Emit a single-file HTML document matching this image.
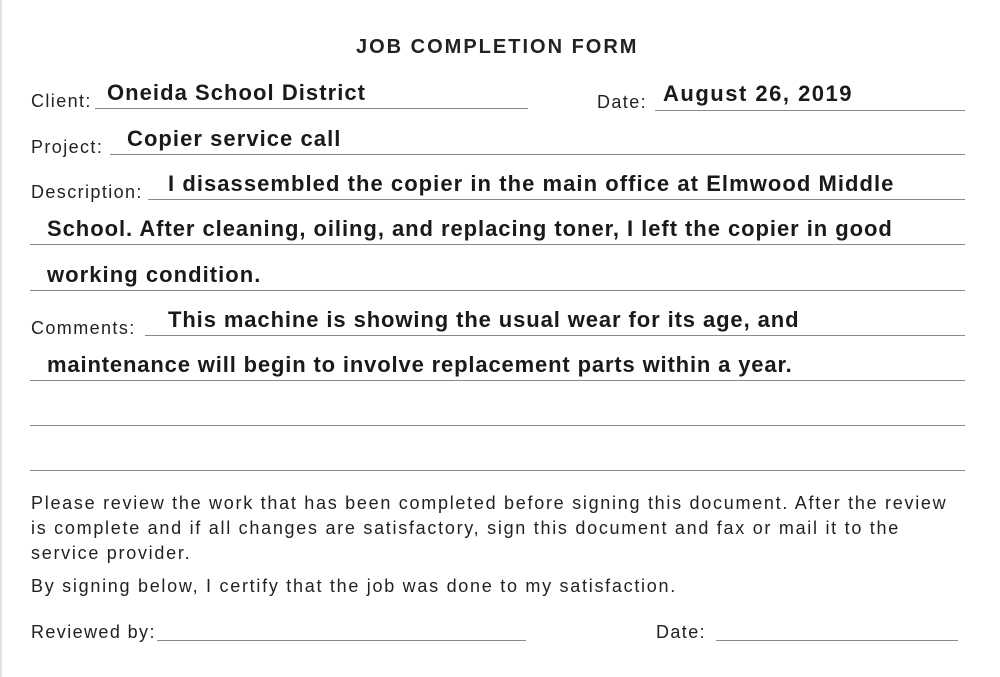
<!DOCTYPE html>
<html><head><meta charset="utf-8"><style>
body{margin:0;width:1000px;height:677px;background:#fff;position:relative;overflow:hidden;font-family:"Liberation Sans",sans-serif;color:#222}
.b{position:absolute;left:0;top:0;width:2px;height:677px;background:#e4e2dc}
.t{position:absolute;white-space:nowrap}
.l{position:absolute;height:0;border-top:1.5px solid #8a8a8a}
.lab{font-size:18px;color:#222;letter-spacing:1.4px}
.h{font-size:22px;font-weight:bold;color:#1a1a1a;letter-spacing:1.05px}
.p{font-size:18px;color:#222;line-height:25px;letter-spacing:1.72px}
</style></head><body>
<div class="b"></div>
<div class="t" style="left:356px;top:36px;font-size:20px;font-weight:bold;letter-spacing:2px">JOB COMPLETION FORM</div>

<div class="t lab" style="left:31px;top:91px">Client:</div>
<div class="l" style="left:95px;width:433px;top:108px"></div>
<div class="t h" style="left:107px;top:80px">Oneida School District</div>
<div class="t lab" style="left:597px;top:92px">Date:</div>
<div class="l" style="left:655px;width:310px;top:110px"></div>
<div class="t h" style="left:663px;top:81px;letter-spacing:1.5px">August 26, 2019</div>

<div class="t lab" style="left:31px;top:137px">Project:</div>
<div class="l" style="left:110px;width:855px;top:154px"></div>
<div class="t h" style="left:127px;top:126px">Copier service call</div>

<div class="t lab" style="left:31px;top:182px">Description:</div>
<div class="l" style="left:148px;width:817px;top:199px"></div>
<div class="t h" style="left:168px;top:171px">I disassembled the copier in the main office at Elmwood Middle</div>
<div class="l" style="left:30px;width:935px;top:244px"></div>
<div class="t h" style="left:47px;top:216px;letter-spacing:0.95px">School. After cleaning, oiling, and replacing toner, I left the copier in good</div>
<div class="l" style="left:30px;width:935px;top:290px"></div>
<div class="t h" style="left:47px;top:262px">working condition.</div>

<div class="t lab" style="left:31px;top:318px">Comments:</div>
<div class="l" style="left:145px;width:820px;top:335px"></div>
<div class="t h" style="left:168px;top:307px;letter-spacing:0.9px">This machine is showing the usual wear for its age, and</div>
<div class="l" style="left:30px;width:935px;top:380px"></div>
<div class="t h" style="left:47px;top:352px;letter-spacing:0.85px">maintenance will begin to involve replacement parts within a year.</div>
<div class="l" style="left:30px;width:935px;top:425px"></div>
<div class="l" style="left:30px;width:935px;top:470px"></div>

<div class="t p" style="left:31px;top:491px">Please review the work that has been completed before signing this document. After the review<br>is complete and if all changes are satisfactory, sign this document and fax or mail it to the<br>service provider.</div>
<div class="t p" style="left:31px;top:574px">By signing below, I certify that the job was done to my satisfaction.</div>

<div class="t lab" style="left:31px;top:622px">Reviewed by:</div>
<div class="l" style="left:157px;width:369px;top:640px"></div>
<div class="t lab" style="left:656px;top:622px">Date:</div>
<div class="l" style="left:716px;width:242px;top:640px"></div>
</body></html>
